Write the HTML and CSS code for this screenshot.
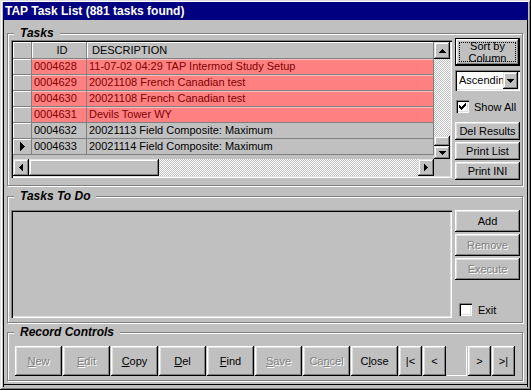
FILE: index.html
```html
<!DOCTYPE html>
<html lang="en">
<head>
  <meta charset="UTF-8">
  <title>TAP Task List</title>
  <link rel="stylesheet" href="styles.css">
</head>
<body>
  <div class="window">
    <div class="titlebar">TAP Task List (881 tasks found)</div>

    <div class="client">
      <!-- task grid -->
      <fieldset class="group tasks">
        <legend>Tasks</legend>
        <div class="group-body">
          <div class="grid">
            <div class="grid-main">
              <div class="table-wrap">
                <table class="task-table">
                  <colgroup>
                    <col class="c-ind"><col class="c-id"><col class="c-desc">
                  </colgroup>
                  <thead>
                    <tr><th></th><th class="h-id">ID</th><th class="h-desc">DESCRIPTION</th></tr>
                  </thead>
                  <tbody>
                    <tr class="hot"><td class="ind"></td><td>0004628</td><td>11-07-02 04:29 TAP Intermod Study Setup</td></tr>
                    <tr class="hot"><td class="ind"></td><td>0004629</td><td>20021108 French Canadian test</td></tr>
                    <tr class="hot"><td class="ind"></td><td>0004630</td><td>20021108 French Canadian test</td></tr>
                    <tr class="hot"><td class="ind"></td><td>0004631</td><td>Devils Tower WY</td></tr>
                    <tr><td class="ind"></td><td>0004632</td><td>20021113 Field Composite: Maximum</td></tr>
                    <tr><td class="ind current"><svg width="5" height="9" viewBox="0 0 5 9"><path d="M0 0h1v1h1v1h1v1h1v1h1v1H4v1H3v1H2v1H1v1H0z"/></svg></td><td>0004633</td><td>20021114 Field Composite: Maximum</td></tr>
                  </tbody>
                </table>
              </div>
              <div class="vscroll">
                <div class="sbtn up"><svg width="7" height="4" viewBox="0 0 7 4"><path d="M3 0h1v1h1v1h1v1h1v1H0V3h1V2h1V1h1z"/></svg></div>
                <div class="track"></div>
                <div class="thumb v"></div>
                <div class="sbtn down"><svg width="7" height="4" viewBox="0 0 7 4"><path d="M0 0h7v1H6v1H5v1H4v1H3V3H2V2H1V1H0z"/></svg></div>
              </div>
            </div>
            <div class="grid-foot">
              <div class="hscroll">
                <div class="sbtn left"><svg width="4" height="7" viewBox="0 0 4 7"><path d="M3 0h1v7H3V6H2V5H1V4H0V3h1V2h1V1h1z"/></svg></div>
                <div class="thumb h"></div>
                <div class="track"></div>
                <div class="sbtn right"><svg width="4" height="7" viewBox="0 0 4 7"><path d="M0 0h1v1h1v1h1v1h1v1H3v1H2v1H1v1H0z"/></svg></div>
              </div>
              <div class="corner"></div>
            </div>
          </div>

          <div class="side side-tasks">
            <button class="btn default sort"><span>Sort by<br>Column</span></button>
            <div class="combo">
              <span class="combo-text">Ascending</span>
              <span class="combo-drop"><svg width="7" height="4" viewBox="0 0 7 4"><path d="M0 0h7v1H6v1H5v1H4v1H3V3H2V2H1V1H0z"/></svg></span>
            </div>
            <label class="check show-all">
              <span class="box"><svg width="7" height="7" viewBox="0 0 7 7"><path d="M6 0h1v3H6v1H5v1H4v1H3v1H2V6H1V5H0V2h1v1h1v1h1V3h1V2h1V1h1z"/></svg></span>
              Show All
            </label>
            <button class="btn small del-results">Del Results</button>
            <button class="btn small">Print List</button>
            <button class="btn small">Print INI</button>
          </div>
        </div>
      </fieldset>

      <!-- queued tasks -->
      <fieldset class="group todo">
        <legend>Tasks To Do</legend>
        <div class="group-body">
          <div class="listbox"></div>
          <div class="side side-todo">
            <button class="btn mid">Add</button>
            <button class="btn mid disabled">Remove</button>
            <button class="btn mid disabled">Execute</button>
            <label class="check exit">
              <span class="box"></span>
              Exit
            </label>
          </div>
        </div>
      </fieldset>

      <!-- navigator -->
      <fieldset class="group record">
        <legend>Record Controls</legend>
        <div class="nav">
          <button class="btn nav-btn disabled"><u>N</u>ew</button>
          <button class="btn nav-btn disabled"><u>E</u>dit</button>
          <button class="btn nav-btn"><u>C</u>opy</button>
          <button class="btn nav-btn"><u>D</u>el</button>
          <button class="btn nav-btn"><u>F</u>ind</button>
          <button class="btn nav-btn disabled"><u>S</u>ave</button>
          <button class="btn nav-btn disabled">Ca<u>n</u>cel</button>
          <button class="btn nav-btn">C<u>l</u>ose</button>
          <button class="btn step">|&lt;</button>
          <button class="btn step">&lt;</button>
          <div class="nav-box"></div>
          <button class="btn step">&gt;</button>
          <button class="btn step">&gt;|</button>
        </div>
      </fieldset>
    </div>
  </div>
</body>
</html>
```

FILE: styles.css
```css
body {
  margin: 0;
  background-color: #c0c0c0;
  font-family: 'Liberation Sans', Arial, sans-serif;
  font-size: 11px;
  color: #000;
}
.window {
  width: 531px;
  height: 390px;
  box-sizing: border-box;
  padding: 2px 3px 3px 3px;
  display: flex;
  flex-direction: column;
  background: #c0c0c0;
  box-shadow: inset -1px -1px #000, inset 1px 1px #dfdfdf, inset -2px -2px #808080, inset 2px 2px #fff;
}
.titlebar {
  height: 18px;
  line-height: 18px;
  padding-left: 2px;
  background: #000080;
  color: #fff;
  font-size: 12px;
  font-weight: bold;
  white-space: nowrap;
}
.client {
  flex: 1;
  padding: 7px 0 0 4px;
  box-shadow: inset 1px 0 #000, inset -1px 0 #000, inset 0 -2px #c0c0c0, inset 0 -3px #000;
}

/* group boxes */
.group {
  margin: 0;
  padding: 1px 2px 0 3px;
  width: 516px;
  box-sizing: border-box;
  border: 1px solid #808080;
  box-shadow: inset 1px 1px #fff, 1px 1px #fff;
  min-width: 0;
}
.group legend {
  margin-left: 3px;
  padding: 0 6px;
  background: #c0c0c0;
  font-size: 12px;
  line-height: 12px;
  font-weight: bold;
  font-style: italic;
}
.tasks {
  height: 159px;
}
.todo {
  height: 133px;
  margin-top: 4px;
  padding-top: 8px;
}
.record {
  height: 55px;
  margin-top: 3px;
  padding-top: 8px;
}
.group-body {
  display: flex;
  gap: 3px;
}

/* sunken boxes */
.grid, .listbox {
  width: 441px;
  box-sizing: border-box;
  padding: 2px;
  background: #c0c0c0;
  box-shadow: inset 1px 1px #808080, inset 2px 2px #000, inset -1px -1px #fff, inset -2px -2px #dfdfdf;
}
.grid {
  height: 138px;
  display: flex;
  flex-direction: column;
}
.listbox {
  height: 108px;
}
.grid-main {
  display: flex;
  height: 117px;
}
.table-wrap {
  flex: 1;
  overflow: hidden;
}
.task-table {
  width: 421px;
  table-layout: fixed;
  border-collapse: separate;
  border-spacing: 0;
  white-space: nowrap;
}
.c-ind { width: 19px; }
.c-id { width: 55px; }
.task-table th, .task-table td {
  padding: 0 0 0 2px;
  overflow: hidden;
  border-right: 1px solid #808080;
  border-bottom: 1px solid #808080;
  text-align: left;
  font-weight: normal;
}
.task-table th {
  height: 16px;
  line-height: 15px;
  padding-top: 1px;
  box-sizing: border-box;
  box-shadow: inset 1px 1px #fff;
}
.task-table th.h-id {
  text-align: center;
  padding-left: 6px;
}
.task-table th.h-desc {
  padding-left: 5px;
}
.task-table td {
  height: 15px;
  line-height: 15px;
  color: #000;
}
.task-table tr.hot td {
  background: #ff8080;
  color: #800000;
  box-shadow: inset 0 1px #ffc0c0;
}
.task-table td.ind {
  padding: 0;
  background: #c0c0c0;
  box-shadow: inset 1px 1px #fff;
}
.task-table tr.hot td.ind {
  background: #c0c0c0;
  box-shadow: inset 1px 1px #fff;
}
.task-table td.current {
  text-align: center;
  vertical-align: middle;
}
.current svg {
  display: block;
  margin: 0 auto;
}

/* scroll bars */
.vscroll {
  width: 16px;
  display: flex;
  flex-direction: column;
}
.grid-foot {
  display: flex;
  height: 17px;
}
.hscroll {
  flex: 1;
  display: flex;
}
.corner {
  width: 16px;
  background: #c0c0c0;
}
.track {
  flex: 1;
  background-color: #fff;
  background-image: repeating-conic-gradient(#c0c0c0 0 25%, #fff 0 50%);
  background-size: 2px 2px;
}
.sbtn, .thumb {
  background: #c0c0c0;
  box-shadow: inset -1px -1px #000, inset 1px 1px #dfdfdf, inset -2px -2px #808080, inset 2px 2px #fff;
}
.sbtn {
  display: flex;
  align-items: center;
  justify-content: center;
}
.sbtn svg, .combo-drop svg, .box svg {
  display: block;
}
.sbtn.up {
  height: 17px;
}
.sbtn.down {
  height: 13px;
}
.thumb.v {
  height: 10px;
}
.sbtn.left, .sbtn.right {
  width: 16px;
}
.thumb.h {
  width: 130px;
}

/* buttons */
.btn {
  display: block;
  margin: 0;
  padding: 0;
  border: 0;
  width: 65px;
  background: #c0c0c0;
  font-family: inherit;
  font-size: 11px;
  color: #000;
  box-shadow: inset -1px -1px #000, inset 1px 1px #fff, inset -2px -2px #808080, inset 2px 2px #dfdfdf;
}
.btn.disabled {
  color: #808080;
  text-shadow: 1px 1px #fff;
}
.btn u {
  text-decoration-thickness: 1px;
  text-underline-offset: 1px;
}
.side {
  width: 65px;
  display: flex;
  flex-direction: column;
}
.side-tasks {
  margin-top: -2px;
}
.btn.default {
  height: 28px;
  line-height: 12px;
  overflow: hidden;
  border: 1px solid #000;
  outline: 1px dotted #000;
  outline-offset: -5px;
}
.btn.small {
  height: 18px;
  margin-top: 2px;
}
.btn.del-results {
  margin-top: 9px;
}
.btn.mid {
  height: 22px;
  margin-bottom: 2px;
}

/* combo box */
.combo {
  margin-top: 4px;
  height: 21px;
  box-sizing: border-box;
  padding: 2px;
  display: flex;
  background: #fff;
  box-shadow: inset 1px 1px #808080, inset 2px 2px #000, inset -1px -1px #fff, inset -2px -2px #dfdfdf;
}
.combo-text {
  flex: 1;
  overflow: hidden;
  white-space: clip;
  padding-left: 2px;
  line-height: 17px;
  font-size: 11px;
}
.combo-drop {
  width: 15px;
  display: flex;
  align-items: center;
  justify-content: center;
  background: #c0c0c0;
  box-shadow: inset -1px -1px #000, inset 1px 1px #dfdfdf, inset -2px -2px #808080, inset 2px 2px #fff;
}

/* check boxes */
.check {
  display: flex;
  align-items: center;
  gap: 5px;
  height: 13px;
  white-space: nowrap;
}
.show-all {
  margin-top: 9px;
  margin-left: 1px;
}
.exit {
  margin-top: 21px;
  margin-left: 4px;
  gap: 6px;
}
.box {
  width: 13px;
  height: 13px;
  box-sizing: border-box;
  display: flex;
  align-items: center;
  justify-content: center;
  background: #fff;
  box-shadow: inset 1px 1px #808080, inset 2px 2px #000, inset -1px -1px #fff, inset -2px -2px #dfdfdf;
}

/* record navigator */
.nav {
  display: flex;
  gap: 1px;
  padding-left: 4px;
}
.nav-btn {
  width: 47px;
  height: 30px;
}
.btn.step {
  width: 23px;
  height: 30px;
}
.nav-box {
  width: 20px;
  height: 30px;
  box-sizing: border-box;
  background: #c0c0c0;
  box-shadow: inset -1px -1px #fff;
}
```
